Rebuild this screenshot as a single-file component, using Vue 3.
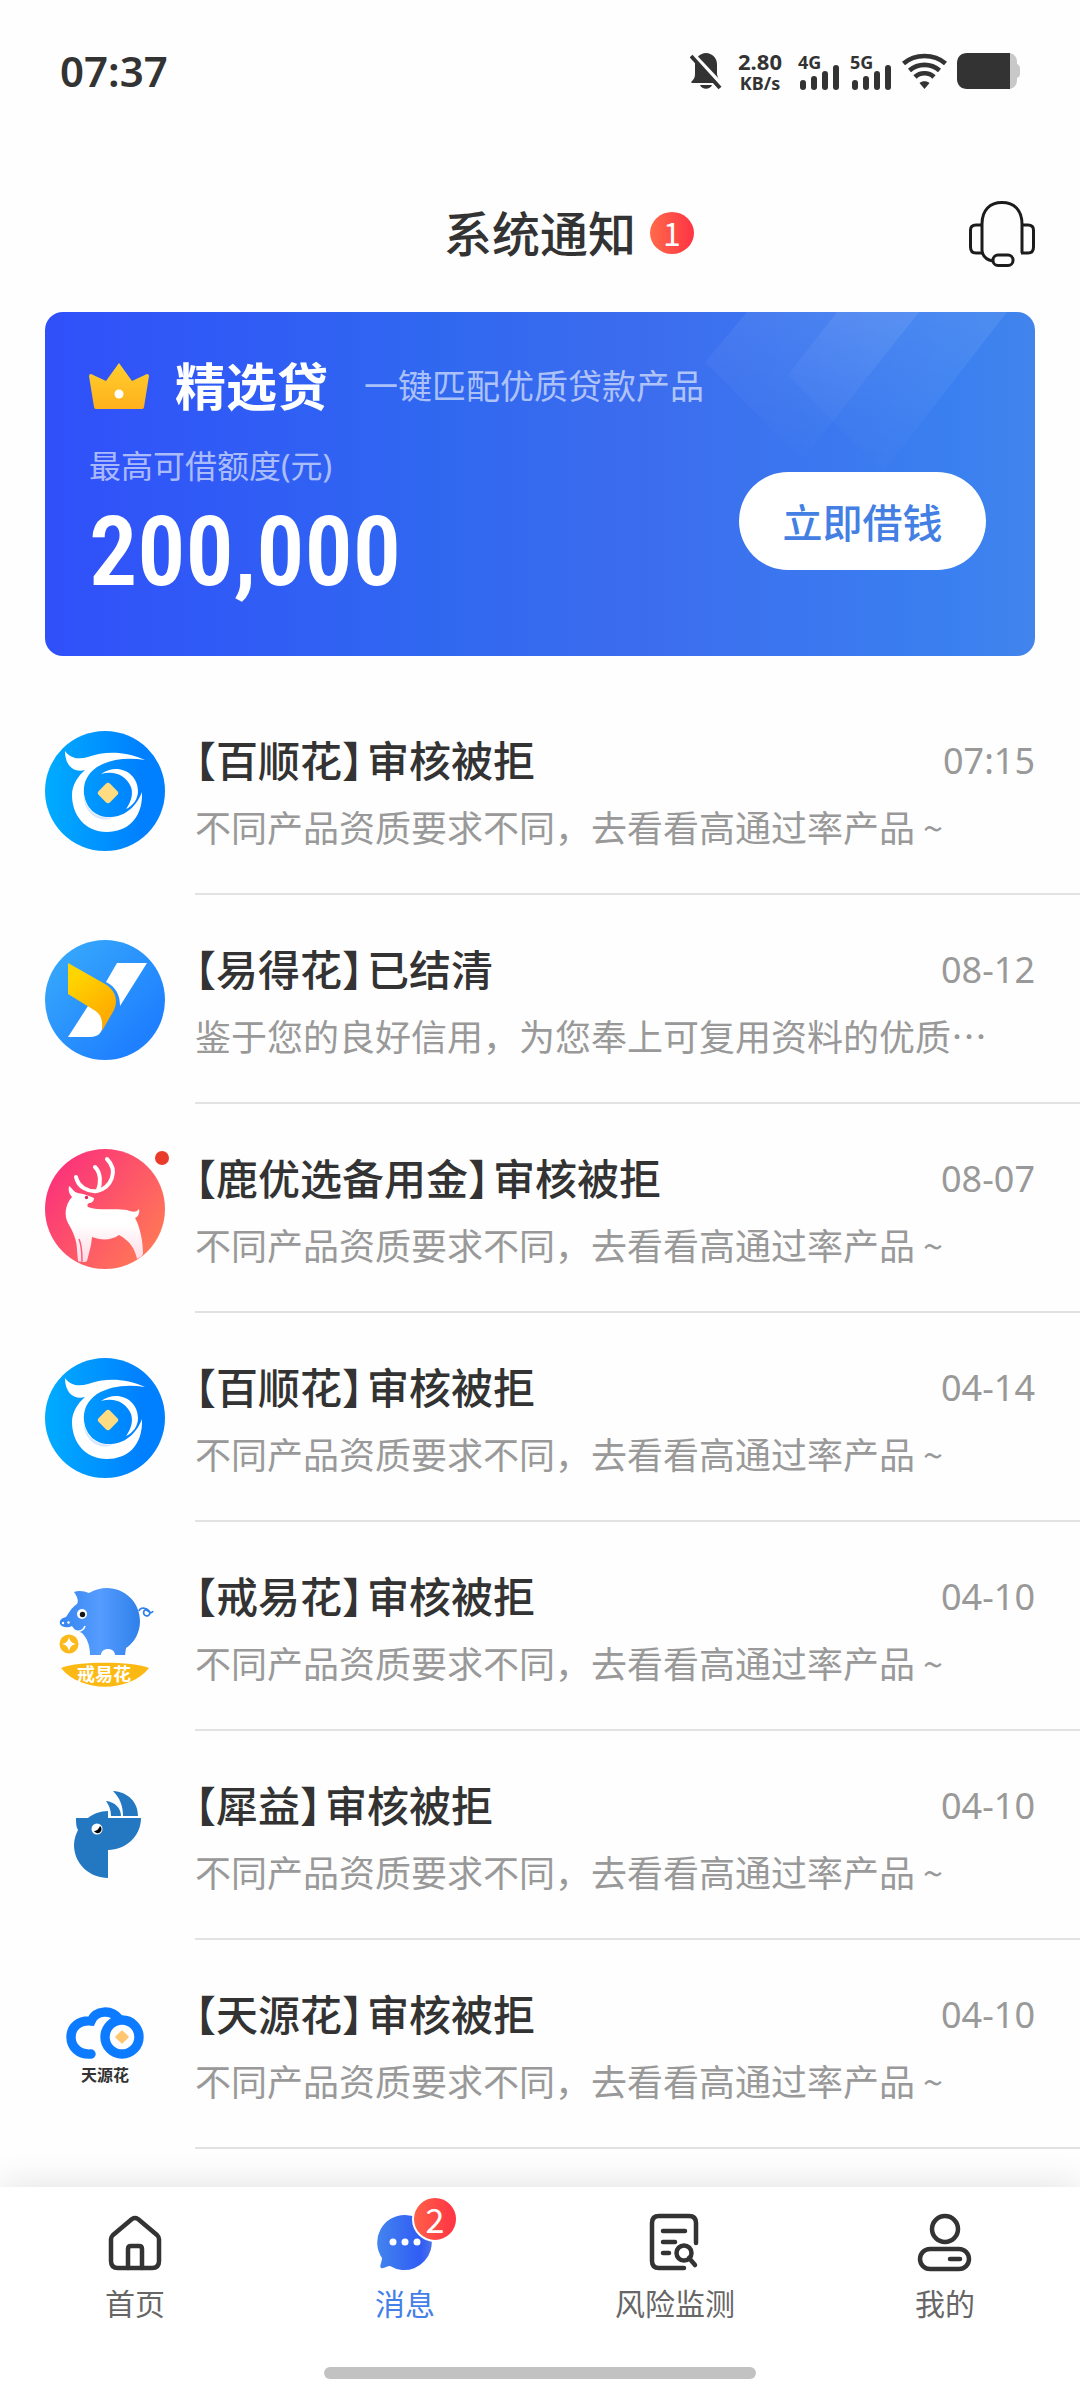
<template>
  <div class="page">
    <!-- Status bar -->
    <div class="status-bar">
      <span class="clock">07:37</span>
      <div class="status-icons">
        <svg class="bell" viewBox="0 0 32 38" aria-hidden="true">
          <path d="M16 1C22 1 27 6 27 12V21C27 26 30 27 30 31H2C1 31 1 30 2 29C5 26 5 24 5 21V12C5 6 10 1 16 1Z" fill="#333" />
          <path d="M10 33H22C20 38 12 38 10 33Z" fill="#333" />
          <path d="M3 2L33 34" stroke="#fff" stroke-width="4" />
          <path d="M1 4L30 36" stroke="#333" stroke-width="4" />
        </svg>
        <div class="net-speed">
          <span class="speed-value">2.80</span>
          <span class="speed-unit">KB/s</span>
        </div>
        <div v-for="net in ['4G', '5G']" :key="net" class="signal">
          <span class="signal-label">{{ net }}</span>
          <svg viewBox="0 0 42 25" aria-hidden="true">
            <rect x="2" y="15" width="6" height="10" rx="3" fill="#333" />
            <rect x="13" y="11" width="6" height="14" rx="3" fill="#333" />
            <rect x="24" y="6" width="6" height="19" rx="3" fill="#333" />
            <rect x="35" y="0" width="6" height="25" rx="3" fill="#333" />
          </svg>
        </div>
        <svg class="wifi" viewBox="0 0 45 38" fill="none" stroke="#333" stroke-width="4.6" aria-hidden="true">
          <path d="M1.500 11.500C13 1.500 32 1.500 43.500 11.500" />
          <path d="M7.500 18.500C16 11 29 11 37.500 18.500" />
          <path d="M13 25C18 20 27 20 32 25" />
          <path d="M17.500 31C20 28.500 25 28.500 27.500 31L22.500 37Z" fill="#333" stroke="none" />
        </svg>
        <svg class="battery" viewBox="0 0 63 36" aria-hidden="true">
          <path d="M50 0H51C57 0 60 4 60 9V11C62 12 63 13 63 15V21C63 23 62 24 60 25V27C60 32 57 36 51 36H50Z" fill="#c8c8c8" />
          <path d="M10 0H53V36H10C4 36 0 32 0 26V10C0 4 4 0 10 0Z" fill="#333" />
        </svg>
      </div>
    </div>

    <!-- Title -->
    <header class="header">
      <span></span>
      <h1 class="header-title">系统通知<span class="count">1</span></h1>
      <button class="service" aria-label="客服">
        <svg viewBox="0 0 66 66" fill="none" stroke="#1c1c1c" stroke-width="3" aria-hidden="true">
          <path d="M13 50V23C13 9 21 1.500 33 1.500S53 9 53 23V52" />
          <path d="M13 24H7C3 24 1.500 26 1.500 29V46C1.500 50 3 52 7 52H13" />
          <path d="M53 24H59C63 24 64.500 26 64.500 29V46C64.500 50 63 52 59 52H52" />
          <path d="M13 50C14 56 18 59 24 60" />
          <rect x="24" y="54" width="20" height="10.500" rx="5" />
        </svg>
      </button>
    </header>

    <!-- Loan card -->
    <section class="card">
      <svg class="card-rays" viewBox="0 0 330 160" aria-hidden="true">
        <defs>
          <linearGradient id="ray" x1="0.7" y1="0" x2="0.3" y2="1">
            <stop offset="0" stop-color="#fff" stop-opacity="0.08" />
            <stop offset="1" stop-color="#fff" stop-opacity="0" />
          </linearGradient>
        </defs>
        <path d="M42 0H214L97 148L0 50Z" fill="url(#ray)" />
        <path d="M132 0H302L178 160L83 63Z" fill="url(#ray)" />
      </svg>
      <div class="card-top">
        <svg class="crown" viewBox="0 0 60 46" aria-hidden="true">
          <defs>
            <linearGradient id="crown" x1="0" y1="0" x2="0" y2="1">
              <stop offset="0" stop-color="#ffcf2e" />
              <stop offset="1" stop-color="#ffb01c" />
            </linearGradient>
          </defs>
          <path d="M30 0L43 18L58 11Q60 11 60 13L55 44Q55 46 53 46H7Q5 46 5 44L0 13Q0 11 2 11L17 18Z" fill="url(#crown)" />
          <circle cx="30" cy="31" r="4.500" fill="#fff" />
        </svg>
        <h2 class="card-title">精选贷</h2>
        <span class="card-slogan">一键匹配优质贷款产品</span>
      </div>
      <div class="card-body">
        <div>
          <div class="limit-label">最高可借额度(元)</div>
          <div class="limit-value">200,000</div>
        </div>
        <button class="borrow">立即借钱</button>
      </div>
    </section>

    <!-- Messages -->
    <ul class="messages">
      <li v-for="(item, index) in messages" :key="index" class="message">
        <div class="avatar">
          <svg v-if="item.logo === 'baishun'" viewBox="0 0 120 120" aria-hidden="true">
            <defs>
              <linearGradient id="baishun">
                <stop offset="0" stop-color="#00acff" />
                <stop offset="0.8" stop-color="#0080ff" />
              </linearGradient>
            </defs>
            <circle cx="60" cy="60" r="60" fill="url(#baishun)" />
            <path d="M20 20C25 27 33 29 43 26C60 20 80 20 100 29C82 26 65 28 52 36C42 43 38 52 39 63C41 78 52 87 66 86C82 85 92 74 97 61C98 88 82 101 62 101C40 101 27 84 27 64C27 54 33 45 40 39C30 42 20 36 20 20Z" fill="#fff" />
            <path d="M39 60C38 76 50 89 68 86C60 93 36 86 39 60Z" fill="#d8e6ff" />
            <path d="M56 43C73 31 93 42 93 60C93 68 88 75 81 78C87 70 88 62 86 56C81 44 69 39 56 43Z" fill="#fff" />
            <rect x="55" y="54" width="16" height="16" rx="3" transform="rotate(45 63 62)" fill="#ffdc82" />
          </svg>

          <svg v-else-if="item.logo === 'yide'" viewBox="0 0 120 120" aria-hidden="true">
            <defs>
              <linearGradient id="yide" x1="0.1" y1="0.1" x2="0.8" y2="0.8">
                <stop offset="0" stop-color="#36a8fb" />
                <stop offset="1" stop-color="#1f80ff" />
              </linearGradient>
              <linearGradient id="yide-fold" x1="0" y1="0" x2="0.6" y2="1">
                <stop offset="0.2" stop-color="#ffd500" />
                <stop offset="1" stop-color="#ffa800" />
              </linearGradient>
            </defs>
            <circle cx="60" cy="60" r="60" fill="url(#yide)" />
            <path d="M72 23H102L75 66C75 55 71 47 61 42Z" fill="#fff" />
            <path d="M43 66L23 97H45C54 97 58 92 58 82C57 74 51 70 43 66Z" fill="#fff" />
            <path d="M23 23L60 44C69 49 74 59 69 70L57 91C58 80 56 74 49 70L23 54Z" fill="url(#yide-fold)" />
          </svg>

          <svg v-else-if="item.logo === 'deer'" viewBox="0 0 120 120" aria-hidden="true">
            <defs>
              <linearGradient id="deer" x1="0.1" y1="0.2" x2="0.9" y2="0.8">
                <stop offset="0" stop-color="#fb3579" />
                <stop offset="1" stop-color="#ff7558" />
              </linearGradient>
              <linearGradient id="deer-body" x1="0" y1="0" x2="0" y2="1">
                <stop offset="0.5" stop-color="#fff" />
                <stop offset="1" stop-color="#ffd9e4" />
              </linearGradient>
            </defs>
            <circle cx="60" cy="60" r="60" fill="url(#deer)" />
            <path d="M24 37C23 41 24 45 27 48C20 56 19 66 23 74C28 83 32 91 32 101L33 112C34 113 36 113 37 112L38 113C40 113 41 113 42 112L46 96L47 88C57 92 67 91 74 86C85 92 90 100 92 110C94 109 97 107 98 105C98 92 95 78 90 69C93 68 95 64 94 60C91 64 87 63 82 61C71 59 53 62 43 58C42 57 42 55 44 54C47 54 49 52 49 49C45 47 41 46 38 45C34 44 31 44 29 42C27 40 26 38 24 37Z" fill="url(#deer-body)" />
            <path d="M37 112C37 104 37 97 34 90" fill="none" stroke="#f95d7b" stroke-width="1.500" />
            <circle cx="41.500" cy="48.500" r="1.700" fill="#d72c5b" />
            <g fill="none" stroke="#fff" stroke-linecap="round" stroke-width="4">
              <path d="M31 28C33 38 43 43 52 42C66 39 74 22 62 10" />
              <path d="M50 18C56 24 56 34 53 41" />
            </g>
          </svg>

          <svg v-else-if="item.logo === 'pig'" viewBox="0 0 120 120" aria-hidden="true">
            <defs>
              <linearGradient id="pig">
                <stop offset="0" stop-color="#3585f0" />
                <stop offset="0.5" stop-color="#559cff" />
                <stop offset="1" stop-color="#2f80ea" />
              </linearGradient>
            </defs>
            <path d="M29 25C34 23 39 24 44 26C68 12 95 29 95 54C95 66 89 76 81 81L80 88H70C70 80 56 80 56 88H45C45 78 42 71 37 66C33 64 29 63 27 59C24 61 17 61 15 57C14 53 17 51 21 50C24 46 26 41 32 37C34 34 32 29 29 25Z" fill="url(#pig)" />
            <path d="M31 64C35 65 39 63 40 59" fill="none" stroke="#fff" stroke-width="1.500" />
            <circle cx="18" cy="56" r="1.200" fill="#fff" />
            <circle cx="23.500" cy="55.500" r="1.200" fill="#fff" />
            <circle cx="37" cy="47" r="5" fill="#fff" />
            <circle cx="37.500" cy="47.500" r="2.700" fill="#151515" />
            <path d="M94 44C95 39 104 41 105 46C104 51 97 49 99 44C101 40 106 49 108 44" fill="none" stroke="#2f80ea" stroke-width="1.700" />
            <circle cx="24" cy="77" r="9.500" fill="#fbb91b" />
            <path d="M24 70Q25 76 31 77Q25 78 24 84Q23 78 17 77Q23 76 24 70Z" fill="#fff" />
            <path d="M16 101C31 94 88 94 104 101C84 126 36 126 16 101Z" fill="#fdb913" />
            <text x="59" y="114" text-anchor="middle" class="pig-name">戒易花</text>
          </svg>

          <svg v-else-if="item.logo === 'rhino'" viewBox="0 0 120 120" aria-hidden="true">
            <g fill="#2478c2">
              <path d="M31 42H43C48 38 55 35 63 35V42H96C96 60 81 74 63 74V102C45 102 29 88 29 69C29 63 31 58 33 54C31 51 31 47 31 42Z" />
              <path d="M61 25C70 26 76 32 76 40H66C66 34 64 29 61 25Z" />
              <path d="M68 15C83 16 93 26 93 40H78C78 30 75 22 68 15Z" />
            </g>
            <circle cx="52" cy="53" r="5.500" fill="#fff" />
            <path d="M55 50A4 4 0 1 1 49 55Q53 55 55 50Z" fill="#000" />
          </svg>

          <svg v-else viewBox="0 0 120 120" aria-hidden="true">
            <g fill="none" stroke="#0d7bff" stroke-width="9.400" stroke-linecap="round">
              <path d="M46 69C34 70 26 62 26 52C26 42 34 35 46 36C51 25 66 24 74 34" />
              <circle cx="77" cy="52" r="17" />
            </g>
            <rect x="72" y="47" width="10" height="10" rx="1" transform="rotate(45 77 52)" fill="#ffc670" />
            <text x="60" y="96" text-anchor="middle" class="cloud-name">天源花</text>
          </svg>
          <i v-if="item.unread" class="dot"></i>
        </div>
        <div class="message-body">
          <div class="message-head">
            <h3 class="message-title">
              <span>【{{ item.name }}】</span>
              <span>{{ item.status }}</span>
            </h3>
            <time class="message-time">{{ item.time }}</time>
          </div>
          <p class="message-text">{{ item.text }}</p>
        </div>
      </li>
    </ul>

    <!-- Bottom tabs -->
    <nav class="tabbar">
      <div class="tabs">
        <a href="#home" class="tab">
          <svg viewBox="0 0 60 60" class="tab-icon" aria-hidden="true">
            <path d="M6 27Q6 25 8 23L27 7Q30 5 33 7L52 23Q54 25 54 27V49Q54 56 47 56H13Q6 56 6 49Z" />
            <path d="M23 56V37Q23 34 26 34H34Q37 34 37 37V56" />
          </svg>
          <span>首页</span>
        </a>
        <a href="#message" class="tab active">
          <span class="tab-badge-wrap">
            <svg viewBox="0 0 60 60" class="tab-bubble" aria-hidden="true">
              <defs>
                <linearGradient id="bubble">
                  <stop offset="0" stop-color="#4384ee" />
                  <stop offset="0.8" stop-color="#305cf5" />
                  <stop offset="1" stop-color="#4a72e8" />
                </linearGradient>
              </defs>
              <path d="M30 3A27.500 27.500 0 1 1 15 54C12 54 9 57 6 56C4 54 7 50 7 46A27.500 27.500 0 0 1 30 3Z" fill="url(#bubble)" />
              <circle cx="18" cy="30" r="3.500" fill="#fff" />
              <circle cx="30" cy="30" r="3.500" fill="#fff" />
              <circle cx="42" cy="30" r="3.500" fill="#fff" />
            </svg>
            <span class="tab-badge">2</span>
          </span>
          <span>消息</span>
        </a>
        <a href="#risk" class="tab">
          <svg viewBox="0 0 60 60" class="tab-icon" aria-hidden="true">
            <path d="M51 31V11Q51 4 44 4H14Q7 4 7 11V49Q7 56 14 56H39" />
            <path d="M18 19H40M18 30H30M18 41H24" />
            <circle cx="39" cy="41" r="7.500" />
            <path d="M44 46L50 53" />
          </svg>
          <span>风险监测</span>
        </a>
        <a href="#mine" class="tab">
          <svg viewBox="0 0 60 60" class="tab-icon" aria-hidden="true">
            <circle cx="30" cy="17" r="13" />
            <rect x="5" y="37" width="49" height="20" rx="10" />
            <path d="M35 47H45" />
          </svg>
          <span>我的</span>
        </a>
      </div>
      <div class="home-indicator"></div>
    </nav>
  </div>
</template>

<script setup>
const rejectText = '不同产品资质要求不同，去看看高通过率产品 ~'

// Notification list
const messages = [
  { logo: 'baishun', name: '百顺花', status: '审核被拒', time: '07:15', text: rejectText },
  { logo: 'yide', name: '易得花', status: '已结清', time: '08-12', text: '鉴于您的良好信用，为您奉上可复用资料的优质…' },
  { logo: 'deer', name: '鹿优选备用金', status: '审核被拒', time: '08-07', text: rejectText, unread: true },
  { logo: 'baishun', name: '百顺花', status: '审核被拒', time: '04-14', text: rejectText },
  { logo: 'pig', name: '戒易花', status: '审核被拒', time: '04-10', text: rejectText },
  { logo: 'rhino', name: '犀益', status: '审核被拒', time: '04-10', text: rejectText },
  { logo: 'cloud', name: '天源花', status: '审核被拒', time: '04-10', text: rejectText }
]
</script>

<style>
body {
  margin: 0;
  background: #fefefe;
}
</style>

<style scoped>
.page {
  display: flex;
  flex-direction: column;
  min-height: 100vh;
  color: #333;
  font-family: "Noto Sans", "Noto Sans CJK SC", sans-serif;
}

h1,
h2,
h3,
p,
ul {
  margin: 0;
  padding: 0;
}

svg {
  display: block;
}

button {
  border: none;
  font-family: inherit;
  cursor: pointer;
}

.status-bar {
  display: flex;
  align-items: center;
  justify-content: space-between;
  height: 142px;
  padding: 0 60px;
}

.clock {
  font-size: 42px;
  line-height: 60px;
  font-weight: 600;
}

.status-icons {
  display: flex;
  align-items: center;
  gap: 10px;
}

.bell {
  width: 32px;
  height: 38px;
}

.net-speed {
  display: flex;
  flex-direction: column;
  align-items: center;
  width: 56px;
  font-weight: 700;
}

.speed-value {
  font-size: 22px;
  line-height: 24px;
}

.speed-unit {
  font-size: 18px;
  line-height: 20px;
}

.signal {
  position: relative;
  width: 42px;
  padding-top: 12px;
}

.signal-label {
  position: absolute;
  top: 0;
  left: 0;
  font-size: 18px;
  line-height: 18px;
  font-weight: 700;
}

.wifi {
  width: 45px;
  height: 38px;
}

.battery {
  width: 63px;
  height: 36px;
}

.header {
  display: grid;
  grid-template-columns: 1fr auto 1fr;
  align-items: center;
  height: 86px;
  padding: 49px 45px 35px;
}

.header-title {
  position: relative;
  font-size: 48px;
  line-height: 60px;
  font-weight: 500;
}

.count {
  position: absolute;
  top: 8px;
  left: calc(100% + 14px);
  width: 44px;
  height: 42px;
  border-radius: 50%;
  background: linear-gradient(90deg, #ff6a4a, #ff3344);
  color: #fff;
  font-family: "Noto Sans CJK SC", sans-serif;
  font-size: 32px;
  line-height: 40px;
  font-weight: 400;
  text-align: center;
}

.service {
  justify-self: end;
  width: 66px;
  height: 66px;
  padding: 0;
  background: none;
}

.card {
  position: relative;
  box-sizing: border-box;
  min-height: 344px;
  margin: 0 45px;
  padding: 44px 49px 0 44px;
  border-radius: 18px;
  background: linear-gradient(90deg, #3050fa, #3068f0 40%, #3c6cee 60%, #3a80f0 92%, #4284ec);
  color: #fff;
  overflow: hidden;
}

.card-rays {
  position: absolute;
  top: 0;
  right: 0;
  width: 330px;
  height: 160px;
}

.card-top {
  display: flex;
  align-items: center;
}

.crown {
  width: 60px;
  height: 46px;
}

.card-title {
  margin: 0 36px 0 26px;
  font-size: 51px;
  line-height: 60px;
  font-weight: 700;
}

.card-slogan {
  color: rgba(255, 255, 255, 0.6);
  font-size: 34px;
  line-height: 60px;
}

.card-body {
  display: flex;
  align-items: flex-start;
  justify-content: space-between;
  padding-top: 28px;
}

.limit-label {
  color: rgba(255, 255, 255, 0.6);
  font-size: 32px;
  line-height: 44px;
}

.limit-value {
  font-family: "Roboto Condensed", "Liberation Sans Narrow", "DejaVu Sans Condensed", sans-serif;
  font-size: 96px;
  line-height: 128px;
  font-weight: 600;
}

.borrow {
  width: 247px;
  height: 98px;
  margin-top: 28px;
  border-radius: 49px;
  background: #fff;
  color: #4480e4;
  font-size: 40px;
  font-weight: 500;
}

.messages {
  padding-top: 30px;
  list-style: none;
}

.message {
  display: flex;
  gap: 30px;
  padding-left: 45px;
}

.avatar {
  position: relative;
  flex: none;
  width: 120px;
  height: 120px;
  margin-top: 45px;
}

.dot {
  position: absolute;
  top: 2px;
  right: -4px;
  width: 14px;
  height: 14px;
  border-radius: 50%;
  background: #ea3a2a;
}

.pig-name {
  fill: #fff;
  font-size: 18px;
  font-weight: 700;
}

.cloud-name {
  fill: #333;
  font-size: 16px;
  font-weight: 700;
}

.message-body {
  flex: 1;
  min-width: 0;
  padding: 45px 45px 40px 0;
  border-bottom: 2px solid #e2e2e2;
}

.message-head {
  display: flex;
  align-items: center;
  justify-content: space-between;
}

.message-title {
  display: flex;
  gap: 4px;
  font-size: 42px;
  line-height: 60px;
  font-weight: 500;
  font-feature-settings: "halt";
}

.message-time {
  color: #999;
  font-size: 36px;
  line-height: 60px;
}

.message-text {
  margin-top: 8px;
  color: #999;
  font-family: "Noto Sans CJK SC", sans-serif;
  font-size: 36px;
  line-height: 54px;
  white-space: nowrap;
  overflow: hidden;
  text-overflow: ellipsis;
}

.tabbar {
  margin-top: auto;
  padding: 25px 0 21px;
  background: #fff;
  box-shadow: 0 0 36px rgba(0, 0, 0, 0.12);
}

.tabs {
  display: flex;
}

.tab {
  display: flex;
  flex: 1;
  flex-direction: column;
  align-items: center;
  gap: 12px;
  color: #666;
  font-size: 30px;
  line-height: 40px;
  text-decoration: none;
}

.tab.active {
  color: #4480e8;
}

.tab-icon,
.tab-bubble {
  width: 60px;
  height: 60px;
}

.tab-icon {
  fill: none;
  stroke: #333;
  stroke-width: 4.5;
  stroke-linecap: round;
  stroke-linejoin: round;
}

.tab-badge-wrap {
  position: relative;
}

.tab-badge {
  position: absolute;
  top: -16px;
  left: 37px;
  width: 42px;
  height: 42px;
  border: 2px solid #fff;
  border-radius: 50%;
  background: linear-gradient(90deg, #ff6048, #ff3344);
  color: #fff;
  font-family: "Noto Sans CJK SC", sans-serif;
  font-size: 34px;
  line-height: 42px;
  text-align: center;
}

.home-indicator {
  width: 40%;
  height: 12px;
  margin: 43px auto 0;
  border-radius: 6px;
  background: #c2c2c2;
}
</style>
